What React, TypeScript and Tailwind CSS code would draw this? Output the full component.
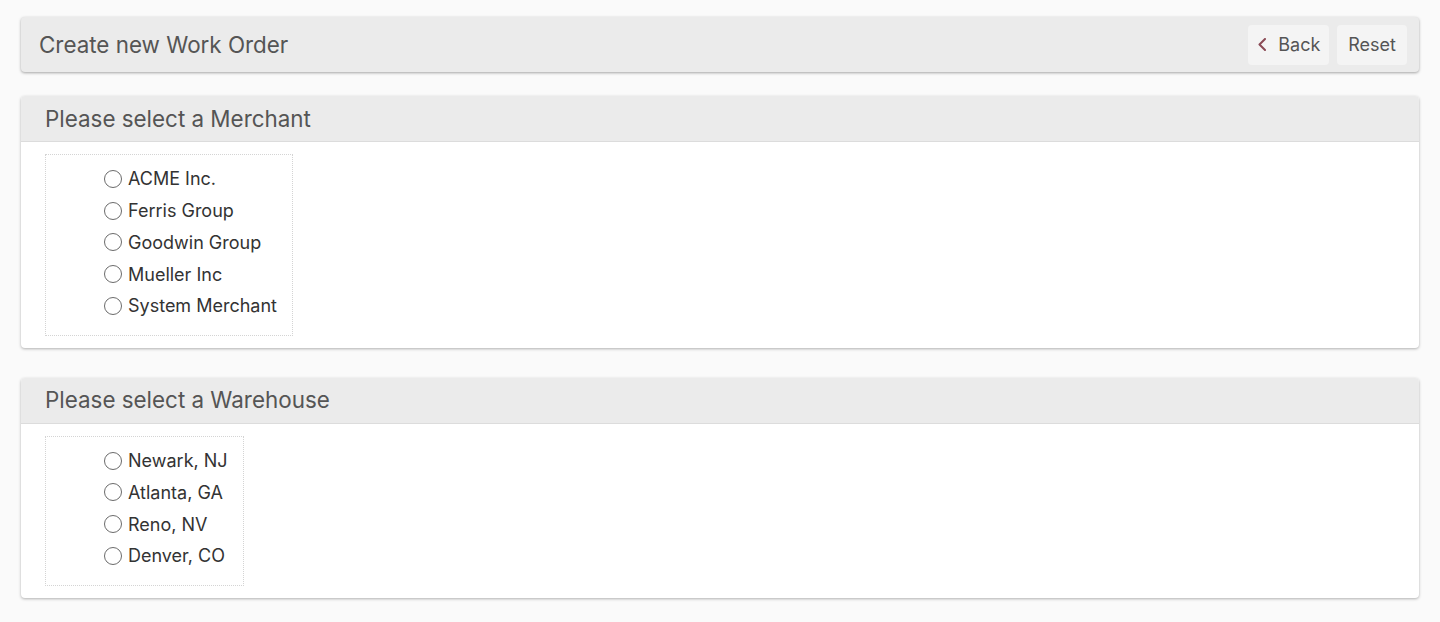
const MERCHANTS = ['ACME Inc.', 'Ferris Group', 'Goodwin Group', 'Mueller Inc', 'System Merchant'];
const WAREHOUSES = ['Newark, NJ', 'Atlanta, GA', 'Reno, NV', 'Denver, CO'];

function RadioList({ items, name }: { items: string[]; name: string }) {
  return (
    <div className="inline-block border border-dotted border-[#d4d4d4] pl-[58px] pr-[15px] pt-2 pb-[13px]">
      {items.map((it) => (
        <label key={it} className="flex items-center h-[31.75px] gap-[6px] text-[18px] text-[#333] cursor-pointer">
          <input type="radio" name={name} className="appearance-none w-[18px] h-[18px] rounded-full border-[1.5px] border-[#6b6b6b] bg-white m-0" />
          <span>{it}</span>
        </label>
      ))}
    </div>
  );
}

function Card({ title, children }: { title: string; children: React.ReactNode }) {
  return (
    <div className="bg-white rounded-[4px] shadow-[0_1px_3px_rgba(0,0,0,0.3)] overflow-hidden">
      <div className="h-[46px] bg-[#ebebeb] border-b border-[#dcdcdc] flex items-center px-6">
        <h2 className="text-[22.4px] text-[#555] font-normal">{title}</h2>
      </div>
      <div className="px-6 pt-3 pb-3">{children}</div>
    </div>
  );
}

export default function App() {
  return (
    <div className="min-h-[622px] bg-[#fafafa] px-[21px] pt-[17px] pb-6" style={{ fontFamily: 'Inter, "Noto Sans", sans-serif' }}>
      <div className="h-[55px] bg-[#ebebeb] rounded-[4px] shadow-[0_1px_3px_rgba(0,0,0,0.35)] flex items-center justify-between pl-[18px] pr-3">
        <h1 className="text-[22.4px] text-[#555] font-normal">Create new Work Order</h1>
        <div className="flex gap-2">
          <button className="h-[40px] pl-[10px] pr-[9px] bg-[#f4f4f4] rounded-[4px] flex items-center gap-[12px] text-[18px] text-[#555]">
            <svg width="8" height="13" viewBox="0 0 8 13" fill="none">
              <path d="M7 1 L1.5 6.5 L7 12" stroke="#8a4a55" strokeWidth="2" strokeLinecap="round" strokeLinejoin="round" />
            </svg>
            Back
          </button>
          <button className="h-[40px] px-[11px] bg-[#f4f4f4] rounded-[4px] text-[18px] text-[#555]">Reset</button>
        </div>
      </div>

      <div className="mt-6">
        <Card title="Please select a Merchant">
          <RadioList items={MERCHANTS} name="merchant" />
        </Card>
      </div>

      <div className="mt-[30px]">
        <Card title="Please select a Warehouse">
          <RadioList items={WAREHOUSES} name="warehouse" />
        </Card>
      </div>
    </div>
  );
}
